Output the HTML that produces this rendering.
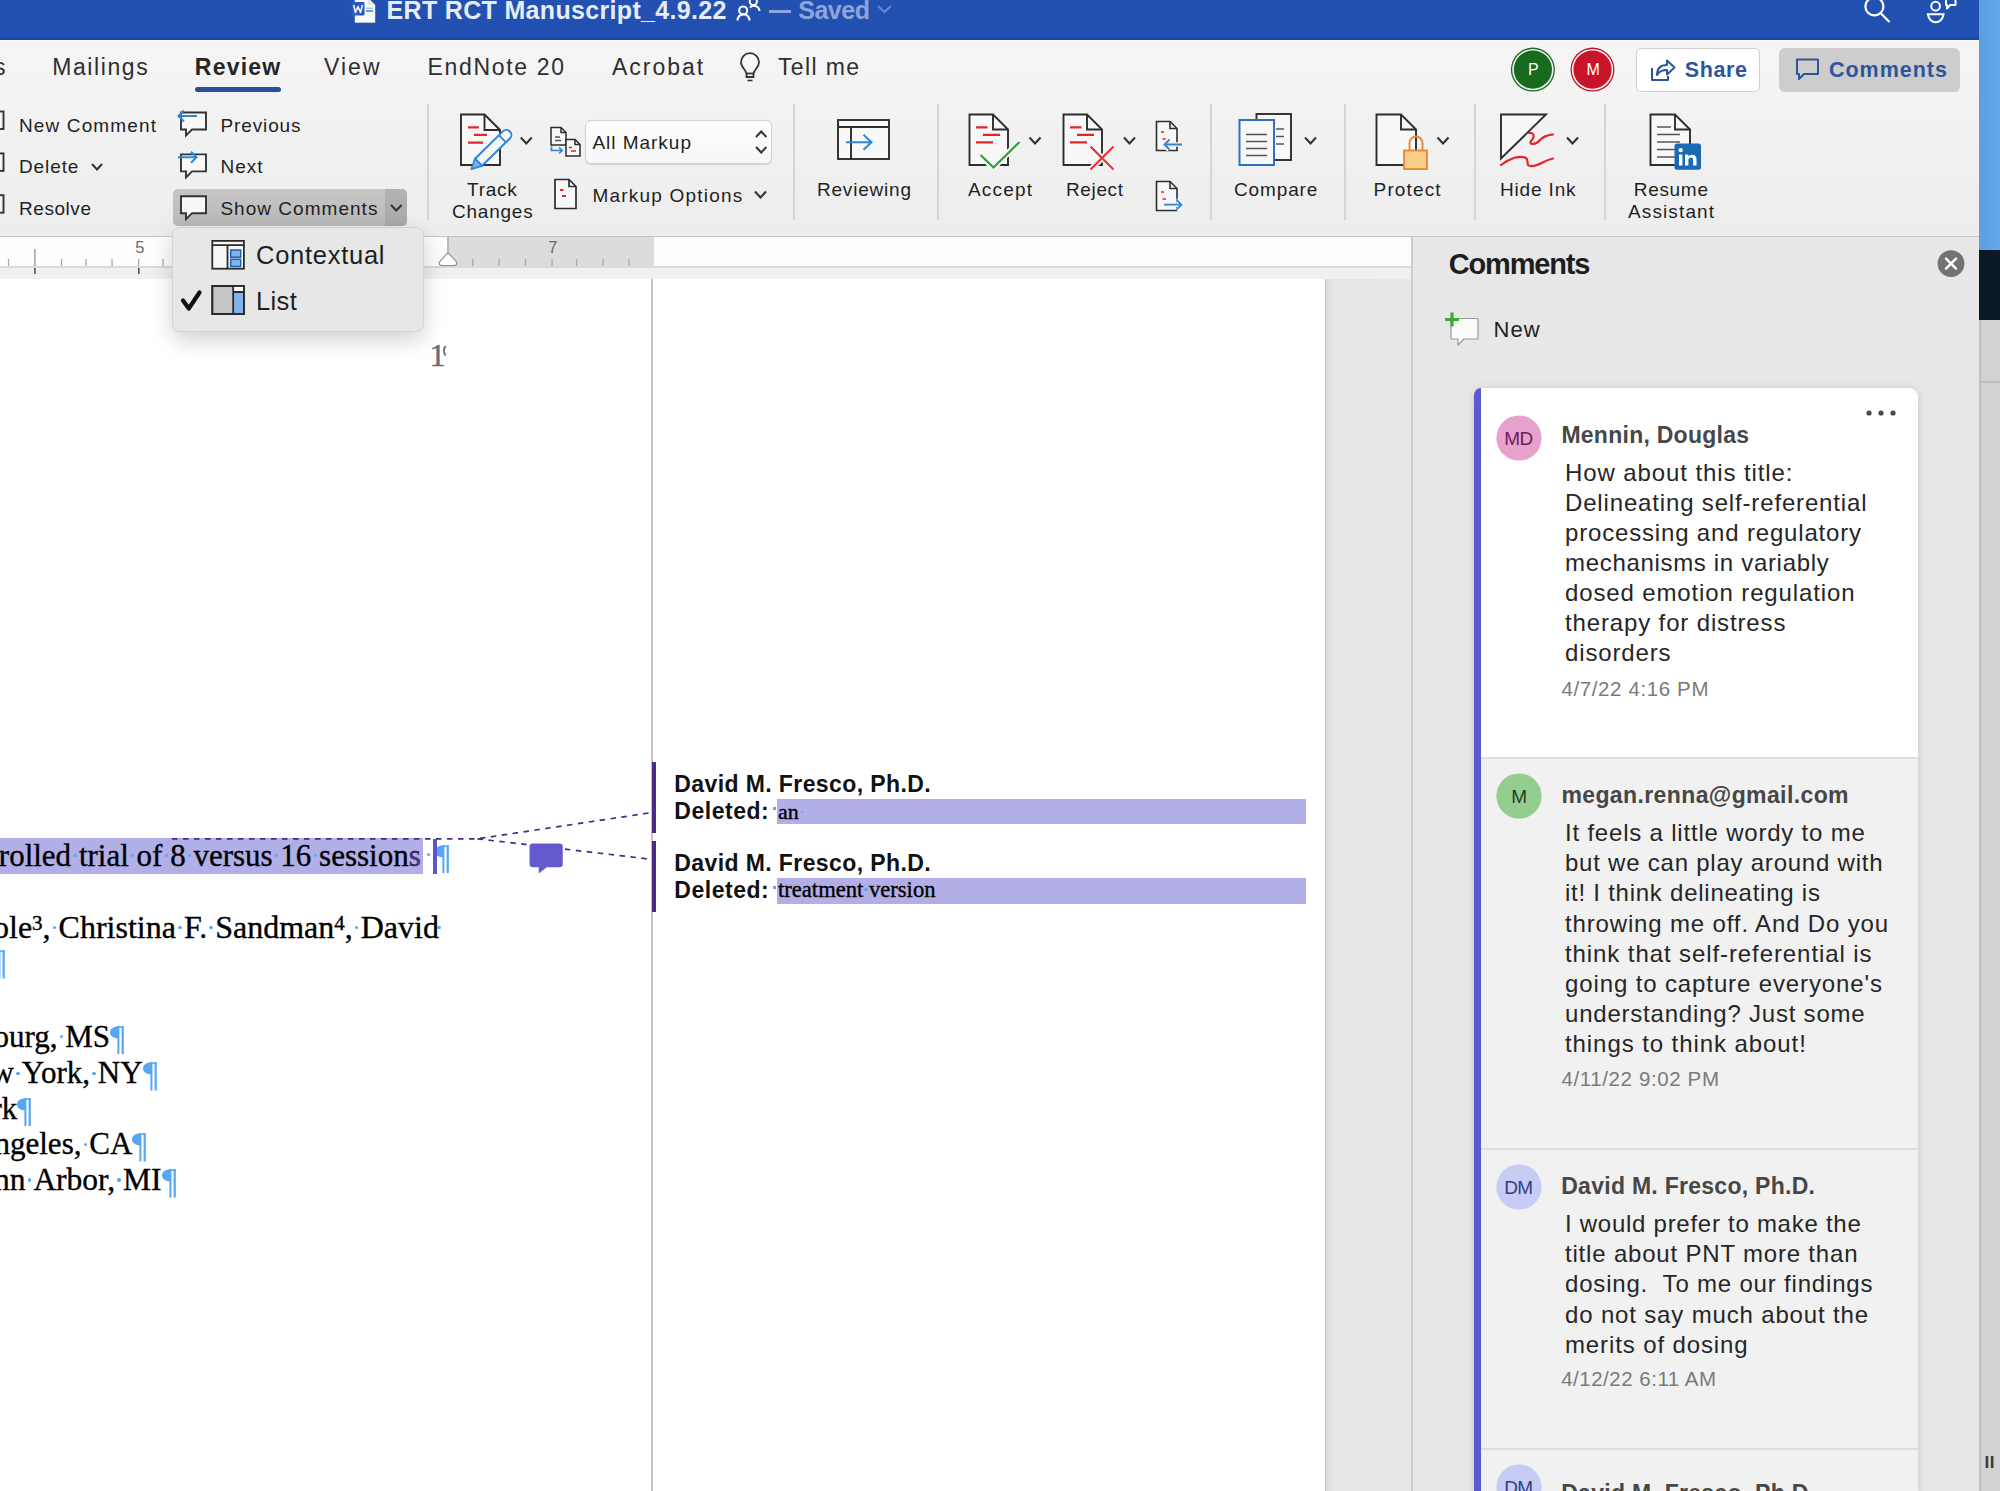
<!DOCTYPE html>
<html><head><meta charset="utf-8"><style>*{margin:0;padding:0;box-sizing:border-box}
html,body{width:2000px;height:1491px;overflow:hidden;background:#e8e8e8;font-family:"Liberation Sans",sans-serif;color:#222;position:relative}
.a{position:absolute;white-space:nowrap}
svg.a{overflow:visible}
.d{position:relative}
.d::after{content:'';position:absolute;left:calc(50% - 1.7px);bottom:0.49em;width:3.4px;height:3.4px;border-radius:50%;background:#59a9f2}
.pc{display:inline-block;vertical-align:-7.5px}
</style></head><body>
<div class="a" style="left:0px;top:0px;width:1979px;height:40px;background:linear-gradient(#2351b2 0,#2250b1 37px,#1848ae 38.5px,#1848ae 39px)"></div>
<div class="a" style="left:0px;top:40px;width:1979px;height:1px;background:#fbfbfb"></div>
<div class="a" style="left:1979px;top:0px;width:21px;height:250px;background:linear-gradient(90deg,#5b9fe0,#63a8ea)"></div>
<div class="a" style="left:1979px;top:250px;width:21px;height:70px;background:#0b1828"></div>
<div class="a" style="left:1979px;top:320px;width:21px;height:1171px;background:linear-gradient(90deg,#b8b8b8,#d2d2d2 3px,#d3d3d3)"></div>
<div class="a" style="left:1979px;top:381px;width:21px;height:1.5px;background:#bdbdbd"></div>
<div class="a" style="left:0px;top:41px;width:1979px;height:195px;background:linear-gradient(#f5f5f5,#ededed)"></div>
<div class="a" style="left:0px;top:236px;width:1979px;height:1px;background:#c6c6c6"></div>
<div class="a" style="left:0px;top:237px;width:1412px;height:30px;background:#fdfdfd"></div>
<div class="a" style="left:448px;top:237px;width:206px;height:30px;background:#dcdcdc"></div>
<div class="a" style="left:0px;top:266px;width:1412px;height:2px;background:#dadada"></div>
<div class="a" style="left:0px;top:268px;width:1412px;height:11px;background:#f0f0f0"></div>
<div class="a" style="left:0px;top:279px;width:1325px;height:1212px;background:#ffffff"></div>
<div class="a" style="left:1325px;top:279px;width:87px;height:1212px;background:linear-gradient(90deg,#dcdcdc,#e6e6e6 8px,#e7e7e7);border-left:1.5px solid #c2c2c2"></div>
<div class="a" style="left:651px;top:279px;width:2px;height:1212px;background:#c4c4c4"></div>
<div class="a" style="left:1411px;top:237px;width:2px;height:1254px;background:#cdcdcd"></div>
<div class="a" style="left:1413px;top:237px;width:566px;height:1254px;background:#e7e7e7"></div>
<svg class="a" style="left:350px;top:-2px;" width="30" height="28" viewBox="0 0 30 28"><path d="M5 0 H18 L25 7 V24.5 H5 Z" fill="#fafafa" stroke="#d8dce8" stroke-width="0.5"/><path d="M18 0 V7 H25" fill="#e8e8e8"/><rect x="16" y="9.5" width="7" height="1.6" fill="#9fc8f2"/><rect x="16" y="12.2" width="7" height="1.6" fill="#4f86d9"/><rect x="1.5" y="4" width="13" height="13.5" rx="1.2" fill="#2a5bc0"/><path d="M3.6 7 L5.5 14.5 L8 8.5 L10.5 14.5 L12.4 7" fill="none" stroke="#fff" stroke-width="1.5" stroke-linejoin="round"/></svg>
<div class="a" style="left:386.5px;top:-1.7px;font:bold 25px/25px 'Liberation Sans',sans-serif;color:#e8ecf7;letter-spacing:0.33px;">ERT RCT Manuscript_4.9.22</div>
<svg class="a" style="left:735px;top:-4px;" width="28" height="28" viewBox="0 0 28 28"><g fill="none" stroke="#fff" stroke-width="2"><circle cx="8.2" cy="14.4" r="4"/><path d="M2.5 24.5 A6 6.3 0 0 1 14.5 24.5"/><circle cx="18.3" cy="5.5" r="3.6"/><path d="M15 11.5 A5.5 5.5 0 0 1 24.5 15"/></g></svg>
<div class="a" style="left:769px;top:10px;width:22px;height:3px;background:#8ea5d9"></div>
<div class="a" style="left:798.3px;top:-2.2px;font:bold 25px/25px 'Liberation Sans',sans-serif;color:#8ea5d9;letter-spacing:-0.51px;">Saved</div>
<svg class="a" style="left:876px;top:3px;" width="18" height="12" viewBox="0 0 18 12"><path d="M2 3 L8.5 9 L15 3" fill="none" stroke="#6e8bd0" stroke-width="1.8"/></svg>
<svg class="a" style="left:1860px;top:-6px;" width="36" height="32" viewBox="0 0 36 32"><g fill="none" stroke="#fff" stroke-width="2.2"><circle cx="14.4" cy="12.4" r="9"/><path d="M21 19.5 L29.5 28"/></g></svg>
<svg class="a" style="left:1922px;top:-4px;" width="40" height="32" viewBox="0 0 40 32"><g fill="none" stroke="#fff" stroke-width="2"><circle cx="13.6" cy="10.2" r="4.4"/><path d="M5.8 18.2 H21.6 A8 9.5 0 0 1 5.8 18.2 Z"/><path d="M24 1 H33.5 V9 H28 L25 12.5 V9 H24 Z" stroke-linejoin="round"/></g></svg>
<div class="a" style="left:-6.0px;top:56.0px;font:normal 23px/23px 'Liberation Sans',sans-serif;color:#2e2e2e;letter-spacing:0.00px;">s</div>
<div class="a" style="left:52.2px;top:56.0px;font:normal 23px/23px 'Liberation Sans',sans-serif;color:#2e2e2e;letter-spacing:1.60px;">Mailings</div>
<div class="a" style="left:194.8px;top:56.0px;font:bold 23px/23px 'Liberation Sans',sans-serif;color:#262626;letter-spacing:1.23px;">Review</div>
<div class="a" style="left:195px;top:87px;width:86px;height:5px;background:#2b4f9c;border-radius:3px"></div>
<div class="a" style="left:324.0px;top:56.0px;font:normal 23px/23px 'Liberation Sans',sans-serif;color:#2e2e2e;letter-spacing:2.02px;">View</div>
<div class="a" style="left:427.5px;top:56.0px;font:normal 23px/23px 'Liberation Sans',sans-serif;color:#2e2e2e;letter-spacing:1.67px;">EndNote 20</div>
<div class="a" style="left:612.0px;top:56.0px;font:normal 23px/23px 'Liberation Sans',sans-serif;color:#2e2e2e;letter-spacing:1.96px;">Acrobat</div>
<svg class="a" style="left:738px;top:50px;" width="24" height="34" viewBox="0 0 24 34"><g fill="none" stroke="#333" stroke-width="1.8"><path d="M8.5 27 V24 C8.5 20 3 17.5 3 12.2 A9 9 0 0 1 21 12.2 C21 17.5 15.5 20 15.5 24 V27 Z" fill="#f7f7f7"/><path d="M8.5 23.5 H15.5"/><path d="M9.5 30.5 H14.5" stroke-width="1.6"/></g></svg>
<div class="a" style="left:778.0px;top:56.0px;font:normal 23px/23px 'Liberation Sans',sans-serif;color:#2e2e2e;letter-spacing:1.35px;">Tell me</div>
<svg class="a" style="left:1508px;top:45px;" width="50" height="50" viewBox="0 0 50 50"><circle cx="24.9" cy="24.6" r="22" fill="#186a1e"/><circle cx="24.9" cy="24.6" r="20.7" fill="#f2f2f2"/><circle cx="24.9" cy="24.6" r="19.1" fill="#186a1e"/></svg>
<div class="a" style="left:1528.0px;top:62.4px;font:normal 16px/16px 'Liberation Sans',sans-serif;color:#fff;letter-spacing:0.00px;">P</div>
<svg class="a" style="left:1568px;top:45px;" width="50" height="50" viewBox="0 0 50 50"><circle cx="24.5" cy="24.6" r="22" fill="#c8142a"/><circle cx="24.5" cy="24.6" r="20.7" fill="#f2f2f2"/><circle cx="24.5" cy="24.6" r="19.1" fill="#c8142a"/></svg>
<div class="a" style="left:1586.6px;top:62.4px;font:normal 16px/16px 'Liberation Sans',sans-serif;color:#fff;letter-spacing:0.00px;">M</div>
<div class="a" style="left:1636px;top:48px;width:124px;height:44px;background:#fff;border:1.5px solid #cfcfcf;border-radius:5px"></div>
<svg class="a" style="left:1648px;top:56px;" width="30" height="28" viewBox="0 0 30 28"><g fill="none" stroke="#2c569c" stroke-width="2" stroke-linejoin="round"><path d="M4 12 V24 H20 V20"/><path d="M9 19 C9 12 13 9 19 9 V4.5 L26.5 11.5 L19 18.5 V14 C14 14 11 15.5 9 19 Z"/></g></svg>
<div class="a" style="left:1684.7px;top:60.2px;font:bold 21.5px/21.5px 'Liberation Sans',sans-serif;color:#2c569c;letter-spacing:0.63px;">Share</div>
<div class="a" style="left:1779px;top:47.5px;width:181px;height:44.5px;background:#cdcdcd;border-radius:6px"></div>
<svg class="a" style="left:1792px;top:56px;" width="30" height="28" viewBox="0 0 30 28"><path d="M5 3.5 H26 V18 H12 L7 23 V18 H5 Z" fill="none" stroke="#2c569c" stroke-width="2" stroke-linejoin="round"/></svg>
<div class="a" style="left:1829.0px;top:60.2px;font:bold 21.5px/21.5px 'Liberation Sans',sans-serif;color:#2c569c;letter-spacing:0.98px;">Comments</div>
<svg class="a" style="left:-22px;top:110px;" width="30" height="24" viewBox="0 0 30 24"><rect x="1" y="1.5" width="24.5" height="17.5" fill="#f7f7f7" stroke="#333" stroke-width="1.9"/></svg>
<svg class="a" style="left:-22px;top:152px;" width="30" height="24" viewBox="0 0 30 24"><rect x="1" y="1.4" width="24.5" height="17.5" fill="#f7f7f7" stroke="#333" stroke-width="1.9"/></svg>
<svg class="a" style="left:-22px;top:194px;" width="30" height="24" viewBox="0 0 30 24"><rect x="1" y="1.2" width="24.5" height="17.5" fill="#f7f7f7" stroke="#333" stroke-width="1.9"/></svg>
<div class="a" style="left:19.0px;top:115.9px;font:normal 19px/19px 'Liberation Sans',sans-serif;color:#1f1f1f;letter-spacing:1.13px;">New Comment</div>
<div class="a" style="left:19.0px;top:157.2px;font:normal 19px/19px 'Liberation Sans',sans-serif;color:#1f1f1f;letter-spacing:0.90px;">Delete</div>
<svg class="a" style="left:88px;top:160px;" width="18" height="14" viewBox="0 0 18 14"><path d="M4 4 L9 9.5 L14 4" fill="none" stroke="#333" stroke-width="2"/></svg>
<div class="a" style="left:19.0px;top:198.9px;font:normal 19px/19px 'Liberation Sans',sans-serif;color:#1f1f1f;letter-spacing:0.55px;">Resolve</div>
<div class="a" style="left:173px;top:189px;width:234px;height:37px;background:linear-gradient(#c6c6c6,#b9b9b9);border-radius:5px"></div>
<div class="a" style="left:385px;top:189px;width:22px;height:37px;background:linear-gradient(#b3b3b3,#a9a9a9);border-radius:0 5px 5px 0"></div>
<svg class="a" style="left:170px;top:105px;" width="50" height="125" viewBox="0 0 50 125"><path d="M11 7.5 H36 V24.5 H22 L16 30.5 V24.5 H11 Z" fill="#f8f8f8" stroke="#333" stroke-width="1.9" stroke-linejoin="miter"/><path d="M11 49.4 H36 V66.4 H22 L16 72.4 V66.4 H11 Z" fill="#f8f8f8" stroke="#333" stroke-width="1.9" stroke-linejoin="miter"/><path d="M11 91.2 H36 V108.2 H22 L16 114.2 V108.2 H11 Z" fill="#f8f8f8" stroke="#333" stroke-width="1.9" stroke-linejoin="miter"/><g fill="none" stroke="#2f86d6" stroke-width="2"><path d="M8 11 H27 M14 5.5 L8.5 11 L14 16.5"/><path d="M8 52.2 H27 M21 46.7 L26.5 52.2 L21 57.7"/></g></svg>
<div class="a" style="left:220.5px;top:115.9px;font:normal 19px/19px 'Liberation Sans',sans-serif;color:#1f1f1f;letter-spacing:0.87px;">Previous</div>
<div class="a" style="left:220.5px;top:157.2px;font:normal 19px/19px 'Liberation Sans',sans-serif;color:#1f1f1f;letter-spacing:0.98px;">Next</div>
<div class="a" style="left:220.4px;top:198.9px;font:normal 19px/19px 'Liberation Sans',sans-serif;color:#1f1f1f;letter-spacing:1.03px;">Show Comments</div>
<svg class="a" style="left:386px;top:200px;" width="20" height="16" viewBox="0 0 20 16"><path d="M5 5 L10.3 10.5 L15.6 5" fill="none" stroke="#333" stroke-width="2"/></svg>
<div class="a" style="left:427px;top:104px;width:2px;height:116px;background:#d5d5d5"></div>
<div class="a" style="left:793px;top:104px;width:2px;height:116px;background:#d5d5d5"></div>
<div class="a" style="left:937px;top:104px;width:2px;height:116px;background:#d5d5d5"></div>
<div class="a" style="left:1210px;top:104px;width:2px;height:116px;background:#d5d5d5"></div>
<div class="a" style="left:1344px;top:104px;width:2px;height:116px;background:#d5d5d5"></div>
<div class="a" style="left:1474px;top:104px;width:2px;height:116px;background:#d5d5d5"></div>
<div class="a" style="left:1604px;top:104px;width:2px;height:116px;background:#d5d5d5"></div>
<svg class="a" style="left:0px;top:0px;" width="2000" height="240" viewBox="0 0 2000 240"><path d="M461 114.5 H484.5 L500 130.0 V165 H461 Z" fill="#f8f8f8" stroke="#2d2d2d" stroke-width="1.9" stroke-linejoin="miter"/><path d="M484.5 114.5 V130.0 H500" fill="none" stroke="#2d2d2d" stroke-width="1.9"/><g stroke="#e4262b" stroke-width="2.2"><path d="M468 127.4 H479 M474 134.8 H487 M468 142.6 H483"/></g><g transform="translate(491 150) rotate(-44.4)"><path d="M-17.5 -5 H21.5 A5 5 0 0 1 21.5 5 H-17.5 Z" fill="#f6f6f6" stroke="#2f86d6" stroke-width="2"/><path d="M-17.5 -5 L-27.5 0 L-17.5 5 Z" fill="#7ab4ea" stroke="#2f86d6" stroke-width="1.8" stroke-linejoin="round"/><path d="M16 -5 V5" stroke="#2f86d6" stroke-width="1.8"/></g><path d="M520.8 137.5 L526.3 143.5 L531.8 137.5" fill="none" stroke="#333" stroke-width="2.1"/><path d="M551 127.5 H561 L566 132.5 V145 H551 Z" fill="#f8f8f8" stroke="#2d2d2d" stroke-width="1.5" stroke-linejoin="miter"/><path d="M561 127.5 V132.5 H566" fill="none" stroke="#2d2d2d" stroke-width="1.5"/><path d="M555 137 H560 M555 140.5 H561" stroke="#555" stroke-width="1.3"/><path d="M566 139.5 H575 L580 144.5 V156 H566 Z" fill="#f8f8f8" stroke="#2d2d2d" stroke-width="1.5" stroke-linejoin="miter"/><path d="M575 139.5 V144.5 H580" fill="none" stroke="#2d2d2d" stroke-width="1.5"/><path d="M569 147.5 H572 M571 151 H576" stroke="#e4262b" stroke-width="1.6"/><path d="M551.5 146.5 V150.5 H562 M559 147.5 L562.2 150.5 L559 153.5" fill="none" stroke="#2f86d6" stroke-width="1.7"/><path d="M555 179.5 H569 L576 186.5 V208.5 H555 Z" fill="#f8f8f8" stroke="#2d2d2d" stroke-width="1.7" stroke-linejoin="miter"/><path d="M569 179.5 V186.5 H576" fill="none" stroke="#2d2d2d" stroke-width="1.7"/><path d="M560 190 H563.5 M562 196 H566" stroke="#e4262b" stroke-width="1.8"/><path d="M755 191.5 L760.5 197.5 L766 191.5" fill="none" stroke="#333" stroke-width="2.1"/><g fill="#f8f8f8" stroke="#2d2d2d" stroke-width="1.9"><rect x="838" y="120" width="51" height="39"/><path d="M838 127 H889 M851 127 V159" fill="none"/></g><path d="M846 142.3 H871.5 M863.5 134.8 L871.5 142.3 L863.5 149.8" fill="none" stroke="#2f86d6" stroke-width="2"/><path d="M969.5 114.5 H993 L1008 129.5 V165 H969.5 Z" fill="#f8f8f8" stroke="#2d2d2d" stroke-width="1.9" stroke-linejoin="miter"/><path d="M993 114.5 V129.5 H1008" fill="none" stroke="#2d2d2d" stroke-width="1.9"/><path d="M976 127.3 H987.5 M983 134.8 H1000 M976 142.3 H993" stroke="#e4262b" stroke-width="2.2"/><path d="M978 152 L993 168 L1021 140" fill="none" stroke="#f5f5f5" stroke-width="6"/><path d="M980.5 155 L993.5 167.5 L1019.5 142" fill="none" stroke="#26a43c" stroke-width="2.2"/><path d="M1029.5 137.5 L1035.0 143.5 L1040.5 137.5" fill="none" stroke="#333" stroke-width="2.1"/><path d="M1063.5 114.5 H1087 L1102 129.5 V165 H1063.5 Z" fill="#f8f8f8" stroke="#2d2d2d" stroke-width="1.9" stroke-linejoin="miter"/><path d="M1087 114.5 V129.5 H1102" fill="none" stroke="#2d2d2d" stroke-width="1.9"/><path d="M1070 127.3 H1081.5 M1077 134.8 H1094 M1070 142.3 H1087" stroke="#e4262b" stroke-width="2.2"/><path d="M1089 145 L1115 171 M1115 145 L1089 171" fill="none" stroke="#f5f5f5" stroke-width="6"/><path d="M1090.5 146.5 L1113.5 169.5 M1113.5 146.5 L1090.5 169.5" fill="none" stroke="#e4343a" stroke-width="2.2"/><path d="M1124 137.5 L1129.5 143.5 L1135 137.5" fill="none" stroke="#333" stroke-width="2.1"/><path d="M1156.5 121.5 H1170 L1177 128.5 V150.5 H1156.5 Z" fill="#f8f8f8" stroke="#2d2d2d" stroke-width="1.6" stroke-linejoin="miter"/><path d="M1170 121.5 V128.5 H1177" fill="none" stroke="#2d2d2d" stroke-width="1.6"/><path d="M1161 132 H1164 M1162.5 139 H1166" stroke="#e4262b" stroke-width="1.7"/><path d="M1163 144.5 H1183 M1169 139 L1163.5 144.5 L1169 150" fill="none" stroke="#f5f5f5" stroke-width="4.5"/><path d="M1164 144.5 H1182 M1169.5 139.5 L1164.5 144.5 L1169.5 149.5" fill="none" stroke="#2f86d6" stroke-width="1.8"/><path d="M1156.5 181.5 H1170 L1177 188.5 V210.5 H1156.5 Z" fill="#f8f8f8" stroke="#2d2d2d" stroke-width="1.6" stroke-linejoin="miter"/><path d="M1170 181.5 V188.5 H1177" fill="none" stroke="#2d2d2d" stroke-width="1.6"/><path d="M1161 192 H1164 M1162.5 199 H1166" stroke="#e4262b" stroke-width="1.7"/><path d="M1163 204.7 H1183 M1177 199 L1182.5 204.7 L1177 210.5" fill="none" stroke="#f5f5f5" stroke-width="4.5"/><path d="M1164 204.7 H1182 M1176.5 199.7 L1181.5 204.7 L1176.5 209.7" fill="none" stroke="#2f86d6" stroke-width="1.8"/><rect x="1256.5" y="114" width="34.5" height="46" fill="#f8f8f8" stroke="#2d2d2d" stroke-width="1.9"/><path d="M1276 129 H1284 M1276 136.5 H1284 M1276 144 H1284" stroke="#555" stroke-width="1.6"/><rect x="1239.5" y="120" width="34.5" height="45" fill="#f8f8f8" stroke="#2f6fc6" stroke-width="2"/><path d="M1246 134.5 H1267 M1246 141.5 H1267 M1246 148.5 H1267 M1246 155.5 H1267" stroke="#555" stroke-width="1.6"/><path d="M1305 137.5 L1310.5 143.5 L1316 137.5" fill="none" stroke="#333" stroke-width="2.1"/><path d="M1376.5 114.5 H1401 L1416 129.5 V165 H1376.5 Z" fill="#f8f8f8" stroke="#2d2d2d" stroke-width="1.9" stroke-linejoin="miter"/><path d="M1401 114.5 V129.5 H1416" fill="none" stroke="#2d2d2d" stroke-width="1.9"/><path d="M1409.5 151 V143 A6.5 6.5 0 0 1 1422.5 143 V151" fill="none" stroke="#e88b35" stroke-width="2"/><rect x="1404" y="150.5" width="23" height="18.5" fill="#f5cf85" stroke="#e88b35" stroke-width="1.9"/><path d="M1437.5 137.5 L1443.0 143.5 L1448.5 137.5" fill="none" stroke="#333" stroke-width="2.1"/><path d="M1501 114.5 H1546 L1501 158.5 Z" fill="#f8f8f8" stroke="#2d2d2d" stroke-width="1.9" stroke-linejoin="miter"/><g fill="none" stroke="#e4262b" stroke-width="2.2" stroke-linecap="round"><path d="M1529 133 C1533 132 1536 136 1531 141 C1528 145 1536 145 1540 140 C1545 135 1549 135 1553 134.5"/><path d="M1501 165 C1510 158 1520 155 1526 158 C1530 161 1524 167 1533 166 C1540 165 1545 160 1553 158.5"/></g><path d="M1567 137.5 L1572.5 143.5 L1578 137.5" fill="none" stroke="#333" stroke-width="2.1"/><path d="M1650.5 114.5 H1675 L1690 129.5 V165 H1650.5 Z" fill="#f8f8f8" stroke="#2d2d2d" stroke-width="1.9" stroke-linejoin="miter"/><path d="M1675 114.5 V129.5 H1690" fill="none" stroke="#2d2d2d" stroke-width="1.9"/><path d="M1657 127 H1671 M1657 134.5 H1680 M1657 142 H1680 M1657 149.5 H1677 M1657 157 H1675" stroke="#555" stroke-width="1.6"/><rect x="1674.5" y="143.5" width="26.5" height="26.3" rx="2.5" fill="#1a6ab3"/><rect x="1679" y="154.5" width="3.4" height="11" fill="#fff"/><circle cx="1680.7" cy="150.2" r="2.1" fill="#fff"/><path d="M1685 165.5 V154.5 H1688.3 V156.5 C1689.5 154.5 1696.5 153 1696.5 159.5 V165.5 H1693.1 V159.8 C1693.1 156.5 1688.4 157 1688.4 160 V165.5 Z" fill="#fff"/></svg>
<div class="a" style="left:467.0px;top:179.9px;font:normal 19px/19px 'Liberation Sans',sans-serif;color:#1f1f1f;letter-spacing:0.77px;">Track</div>
<div class="a" style="left:452.0px;top:201.9px;font:normal 19px/19px 'Liberation Sans',sans-serif;color:#1f1f1f;letter-spacing:0.77px;">Changes</div>
<div class="a" style="left:584.5px;top:119.5px;width:187.5px;height:44px;background:linear-gradient(#fdfdfd,#f7f7f7);border:1px solid #d2d2d2;border-radius:6px;box-shadow:0 0.5px 1px rgba(0,0,0,0.12)"></div>
<div class="a" style="left:592.4px;top:132.9px;font:normal 19px/19px 'Liberation Sans',sans-serif;color:#1f1f1f;letter-spacing:0.98px;">All Markup</div>
<svg class="a" style="left:750px;top:125px;" width="22" height="34" viewBox="0 0 22 34"><path d="M6 12 L11.2 6.5 L16.4 12 M6 22 L11.2 27.5 L16.4 22" fill="none" stroke="#333" stroke-width="2"/></svg>
<div class="a" style="left:592.4px;top:186.2px;font:normal 19px/19px 'Liberation Sans',sans-serif;color:#1f1f1f;letter-spacing:1.22px;">Markup Options</div>
<div class="a" style="left:817.0px;top:179.9px;font:normal 19px/19px 'Liberation Sans',sans-serif;color:#1f1f1f;letter-spacing:0.79px;">Reviewing</div>
<div class="a" style="left:968.0px;top:179.9px;font:normal 19px/19px 'Liberation Sans',sans-serif;color:#1f1f1f;letter-spacing:1.19px;">Accept</div>
<div class="a" style="left:1066.0px;top:179.9px;font:normal 19px/19px 'Liberation Sans',sans-serif;color:#1f1f1f;letter-spacing:0.63px;">Reject</div>
<div class="a" style="left:1234.0px;top:179.9px;font:normal 19px/19px 'Liberation Sans',sans-serif;color:#1f1f1f;letter-spacing:0.87px;">Compare</div>
<div class="a" style="left:1373.6px;top:179.9px;font:normal 19px/19px 'Liberation Sans',sans-serif;color:#1f1f1f;letter-spacing:1.13px;">Protect</div>
<div class="a" style="left:1500.0px;top:179.9px;font:normal 19px/19px 'Liberation Sans',sans-serif;color:#1f1f1f;letter-spacing:0.84px;">Hide Ink</div>
<div class="a" style="left:1633.8px;top:179.9px;font:normal 19px/19px 'Liberation Sans',sans-serif;color:#1f1f1f;letter-spacing:0.68px;">Resume</div>
<div class="a" style="left:1628.0px;top:201.9px;font:normal 19px/19px 'Liberation Sans',sans-serif;color:#1f1f1f;letter-spacing:1.12px;">Assistant</div>
<svg class="a" style="left:0px;top:0px;" width="700" height="300" viewBox="0 0 700 300"><rect x="7.9" y="259" width="1.3" height="7" fill="#a9a9a9"/><rect x="60.9" y="259" width="1.3" height="7" fill="#a9a9a9"/><rect x="85.4" y="259" width="1.3" height="7" fill="#a9a9a9"/><rect x="111.4" y="259" width="1.3" height="7" fill="#a9a9a9"/><rect x="138.0" y="259" width="1.3" height="7" fill="#a9a9a9"/><rect x="162.4" y="259" width="1.3" height="7" fill="#a9a9a9"/><rect x="472.1" y="259" width="1.3" height="7" fill="#a9a9a9"/><rect x="498.4" y="259" width="1.3" height="7" fill="#a9a9a9"/><rect x="524.8" y="259" width="1.3" height="7" fill="#a9a9a9"/><rect x="575.9" y="259" width="1.3" height="7" fill="#a9a9a9"/><rect x="602.4" y="259" width="1.3" height="7" fill="#a9a9a9"/><rect x="628.4" y="259" width="1.3" height="7" fill="#a9a9a9"/><rect x="551.4" y="259" width="1.3" height="7" fill="#a9a9a9"/><rect x="34.2" y="249" width="1.4" height="17" fill="#9a9a9a"/><rect x="34.1" y="268" width="1.6" height="6" fill="#555"/><rect x="138" y="268" width="1.6" height="6" fill="#555"/><rect x="447.3" y="237" width="1.3" height="15" fill="#a0a0a0"/><path d="M448 252.5 L456.5 262 Q457.5 265.5 454 265.5 H442 Q438.5 265.5 439.5 262 Z" fill="#fff" stroke="#8a8a8a" stroke-width="1.1"/></svg>
<div class="a" style="left:135.3px;top:238.5px;font:normal 16.5px/16.5px 'Liberation Sans',sans-serif;color:#6a6a6a;letter-spacing:0.00px;">5</div>
<div class="a" style="left:548.3px;top:239.0px;font:normal 16.5px/16.5px 'Liberation Sans',sans-serif;color:#6a6a6a;letter-spacing:0.00px;">7</div>
<div class="a" style="left:429.5px;top:339.0px;font:normal 32px/32px 'Liberation Serif',serif;color:#6e6e6e;letter-spacing:0.00px;-webkit-text-stroke:0.5px #6e6e6e">1</div>
<svg class="a" style="left:441px;top:344px;" width="8" height="14" viewBox="0 0 8 14"><path d="M4.8 2 C2.2 4.5 2.2 9 4.8 11.5" fill="none" stroke="#7a7a7a" stroke-width="2"/></svg>
<div class="a" style="left:0px;top:838px;width:423px;height:36px;background:#b1aee8"></div>
<div class="a" style="left:-1.2px;top:839.6px;font:31px/31px 'Liberation Serif',serif;color:#000;-webkit-text-stroke:0.35px #000">rolled<span class="d"> </span>trial<span class="d"> </span>of<span class="d"> </span>8<span class="d"> </span>versus<span class="d"> </span>16<span class="d"> </span>session<span style="color:#5b2d90">s</span></div>
<div class="a" style="left:426.5px;top:853px;width:3px;height:3px;background:#59a9f2;border-radius:50%"></div>
<div class="a" style="left:435px;top:839.6px;font:31px/31px 'Liberation Serif',serif;color:#000;-webkit-text-stroke:0.35px #000"><svg class="pc" width="14" height="28.5" viewBox="0 0 14 28.5"><g fill="#56a6f5"><path d="M8.9 0.3 C2.8 0.3 0 3.4 0 6.4 C0 9.5 2.8 12.3 8.9 12.3 Z"/><rect x="7.4" y="0.3" width="8.2" height="1.6"/><rect x="7.4" y="0.3" width="2" height="28.2"/><rect x="11.6" y="0.3" width="2.2" height="28.2"/></g></svg></div>
<div class="a" style="left:433px;top:838.7px;width:4px;height:35px;background:#5e55c8"></div>
<div class="a" style="left:-7px;top:910.7px;font:32px/32px 'Liberation Serif',serif;color:#000;-webkit-text-stroke:0.35px #000">ole<span style="font-size:21px;vertical-align:8px;line-height:0">3</span>,<span class="d"> </span>Christina<span class="d"> </span>F.<span class="d"> </span>Sandman<span style="font-size:21px;vertical-align:8px;line-height:0">4</span>,<span class="d"> </span>David<span class="d"> </span></div>
<div class="a" style="left:-9px;top:945.0px;font:31px/31px 'Liberation Serif',serif;color:#000;-webkit-text-stroke:0.35px #000"><svg class="pc" width="14" height="28.5" viewBox="0 0 14 28.5"><g fill="#56a6f5"><path d="M8.9 0.3 C2.8 0.3 0 3.4 0 6.4 C0 9.5 2.8 12.3 8.9 12.3 Z"/><rect x="7.4" y="0.3" width="8.2" height="1.6"/><rect x="7.4" y="0.3" width="2" height="28.2"/><rect x="11.6" y="0.3" width="2.2" height="28.2"/></g></svg></div>
<div class="a" style="left:-6.5px;top:1020.5px;font:31px/31px 'Liberation Serif',serif;color:#000;-webkit-text-stroke:0.35px #000">ourg,<span class="d"> </span>MS<svg class="pc" width="14" height="28.5" viewBox="0 0 14 28.5"><g fill="#56a6f5"><path d="M8.9 0.3 C2.8 0.3 0 3.4 0 6.4 C0 9.5 2.8 12.3 8.9 12.3 Z"/><rect x="7.4" y="0.3" width="8.2" height="1.6"/><rect x="7.4" y="0.3" width="2" height="28.2"/><rect x="11.6" y="0.3" width="2.2" height="28.2"/></g></svg></div>
<div class="a" style="left:-8.4px;top:1057.3px;font:31px/31px 'Liberation Serif',serif;color:#000;-webkit-text-stroke:0.35px #000">w<span class="d"> </span>York,<span class="d"> </span>NY<svg class="pc" width="14" height="28.5" viewBox="0 0 14 28.5"><g fill="#56a6f5"><path d="M8.9 0.3 C2.8 0.3 0 3.4 0 6.4 C0 9.5 2.8 12.3 8.9 12.3 Z"/><rect x="7.4" y="0.3" width="8.2" height="1.6"/><rect x="7.4" y="0.3" width="2" height="28.2"/><rect x="11.6" y="0.3" width="2.2" height="28.2"/></g></svg></div>
<div class="a" style="left:-8.5px;top:1092.9px;font:31px/31px 'Liberation Serif',serif;color:#000;-webkit-text-stroke:0.35px #000">rk<svg class="pc" width="14" height="28.5" viewBox="0 0 14 28.5"><g fill="#56a6f5"><path d="M8.9 0.3 C2.8 0.3 0 3.4 0 6.4 C0 9.5 2.8 12.3 8.9 12.3 Z"/><rect x="7.4" y="0.3" width="8.2" height="1.6"/><rect x="7.4" y="0.3" width="2" height="28.2"/><rect x="11.6" y="0.3" width="2.2" height="28.2"/></g></svg></div>
<div class="a" style="left:-5.5px;top:1128.4px;font:31px/31px 'Liberation Serif',serif;color:#000;-webkit-text-stroke:0.35px #000">ngeles,<span class="d"> </span>CA<svg class="pc" width="14" height="28.5" viewBox="0 0 14 28.5"><g fill="#56a6f5"><path d="M8.9 0.3 C2.8 0.3 0 3.4 0 6.4 C0 9.5 2.8 12.3 8.9 12.3 Z"/><rect x="7.4" y="0.3" width="8.2" height="1.6"/><rect x="7.4" y="0.3" width="2" height="28.2"/><rect x="11.6" y="0.3" width="2.2" height="28.2"/></g></svg></div>
<div class="a" style="left:-6px;top:1164.2px;font:31.5px/31.5px 'Liberation Serif',serif;color:#000;-webkit-text-stroke:0.35px #000">nn<span class="d"> </span>Arbor,<span class="d"> </span>MI<svg class="pc" width="14" height="28.5" viewBox="0 0 14 28.5"><g fill="#56a6f5"><path d="M8.9 0.3 C2.8 0.3 0 3.4 0 6.4 C0 9.5 2.8 12.3 8.9 12.3 Z"/><rect x="7.4" y="0.3" width="8.2" height="1.6"/><rect x="7.4" y="0.3" width="2" height="28.2"/><rect x="11.6" y="0.3" width="2.2" height="28.2"/></g></svg></div>
<svg class="a" style="left:0px;top:780px;" width="660" height="100" viewBox="0 0 660 100"><g fill="none" stroke="#4b2a85" stroke-width="1.7" stroke-dasharray="5.5 5.5"><path d="M172 58.8 H477.5 L652 32.5"/><path d="M477.5 58.8 L652 79.4"/></g><path d="M533 62.75 H559.5 Q563.5 62.75 563.5 66.75 V84 Q563.5 88 559.5 88 H547 L538 95 V88 H533 Q528.75 88 528.75 84 V66.75 Q528.75 62.75 533 62.75 Z" fill="#6459cf" stroke="#fff" stroke-width="1.5"/></svg>
<div class="a" style="left:652px;top:761.5px;width:4px;height:71.3px;background:#4e2a87"></div>
<div class="a" style="left:652px;top:840.6px;width:4px;height:71px;background:#4e2a87"></div>
<div class="a" style="left:674.3px;top:773.1px;font:bold 23px/23px 'Liberation Sans',sans-serif;color:#111;letter-spacing:0.40px;">David M. Fresco, Ph.D.</div>
<div class="a" style="left:674.3px;top:799.7px;font:bold 23px/23px 'Liberation Sans',sans-serif;color:#111;letter-spacing:0.52px;">Deleted:</div>
<div class="a" style="left:777.3px;top:798.5px;width:528.5px;height:25.3px;background:#b1aee8"></div>
<div class="a" style="left:773px;top:806.5px;width:3px;height:3.4px;background:#59a9f2"></div>
<div class="a" style="left:778px;top:800.6px;font:22px/22px 'Liberation Serif',serif;color:#000;-webkit-text-stroke:0.35px #000">an</div>
<div class="a" style="left:801px;top:811px;width:2.4px;height:2.4px;background:#59a9f2;border-radius:50%"></div>
<div class="a" style="left:674.3px;top:852.3px;font:bold 23px/23px 'Liberation Sans',sans-serif;color:#111;letter-spacing:0.40px;">David M. Fresco, Ph.D.</div>
<div class="a" style="left:674.3px;top:878.5px;font:bold 23px/23px 'Liberation Sans',sans-serif;color:#111;letter-spacing:0.52px;">Deleted:</div>
<div class="a" style="left:777.3px;top:877.7px;width:528.5px;height:26.1px;background:#b1aee8"></div>
<div class="a" style="left:773px;top:885.5px;width:3px;height:3.4px;background:#59a9f2"></div>
<div class="a" style="left:778px;top:879.1px;font:22.6px/22.6px 'Liberation Serif',serif;color:#000;-webkit-text-stroke:0.35px #000">treatment<span class="d"> </span>version</div>
<div class="a" style="left:1448.8px;top:249.8px;font:bold 29px/29px 'Liberation Sans',sans-serif;color:#1e1e1e;letter-spacing:-1.18px;">Comments</div>
<svg class="a" style="left:1936px;top:249px;" width="30" height="30" viewBox="0 0 30 30"><circle cx="15" cy="14.6" r="13.4" fill="#737373"/><path d="M10 9.6 L20 19.6 M20 9.6 L10 19.6" stroke="#fff" stroke-width="2.4" stroke-linecap="round"/></svg>
<svg class="a" style="left:1440px;top:308px;" width="45" height="45" viewBox="0 0 45 45"><path d="M11 10.5 H38 V31 H24 L18 37 V31 H11 Z" fill="#fbfbfb" stroke="#9a9a9a" stroke-width="1.2" stroke-linejoin="round"/><path d="M12 4.5 V18.5 M5 11.5 H19" stroke="#3ea83a" stroke-width="3.2"/></svg>
<div class="a" style="left:1493.6px;top:318.7px;font:normal 22px/22px 'Liberation Sans',sans-serif;color:#222;letter-spacing:1.05px;">New</div>
<div class="a" style="left:1474px;top:388px;width:444px;height:1103px;background:#f1f1f1;border-radius:9px 9px 0 0;box-shadow:0 1px 9px rgba(0,0,0,0.16)"></div>
<div class="a" style="left:1474px;top:388px;width:444px;height:369px;background:#ffffff;border-radius:9px 9px 0 0"></div>
<div class="a" style="left:1474px;top:388px;width:7px;height:1103px;background:#5d57d2;border-radius:9px 0 0 0"></div>
<div class="a" style="left:1481px;top:757px;width:437px;height:1.5px;background:#dedede"></div>
<div class="a" style="left:1481px;top:1148px;width:437px;height:1.5px;background:#dedede"></div>
<div class="a" style="left:1481px;top:1448px;width:437px;height:1.5px;background:#dedede"></div>
<svg class="a" style="left:1862px;top:405px;" width="40" height="16" viewBox="0 0 40 16"><circle cx="7" cy="8" r="2.6" fill="#4a4a4a"/><circle cx="19" cy="8" r="2.6" fill="#4a4a4a"/><circle cx="31" cy="8" r="2.6" fill="#4a4a4a"/></svg>
<svg class="a" style="left:1495.7px;top:415px;" width="46" height="46" viewBox="0 0 46 46"><circle cx="23" cy="23" r="22.6" fill="#e7a1cd"/></svg>
<div class="a" style="left:1504.2px;top:428.9px;font:normal 19px/19px 'Liberation Sans',sans-serif;color:#6b1d57;letter-spacing:-0.55px;">MD</div>
<svg class="a" style="left:1495.7px;top:773.4px;" width="46" height="46" viewBox="0 0 46 46"><circle cx="23" cy="23" r="22.6" fill="#94cd90"/></svg>
<div class="a" style="left:1511.2px;top:787.3px;font:normal 19px/19px 'Liberation Sans',sans-serif;color:#1f3f1f;letter-spacing:0.00px;">M</div>
<svg class="a" style="left:1495.7px;top:1164px;" width="46" height="46" viewBox="0 0 46 46"><circle cx="23" cy="23" r="22.6" fill="#c7ccf4"/></svg>
<div class="a" style="left:1504.2px;top:1177.9px;font:normal 19px/19px 'Liberation Sans',sans-serif;color:#33407f;letter-spacing:-0.55px;">DM</div>
<svg class="a" style="left:1495.7px;top:1463.6px;" width="46" height="46" viewBox="0 0 46 46"><circle cx="23" cy="23" r="22.6" fill="#c7ccf4"/></svg>
<div class="a" style="left:1504.2px;top:1477.5px;font:normal 19px/19px 'Liberation Sans',sans-serif;color:#33407f;letter-spacing:-0.55px;">DM</div>
<div class="a" style="left:1561.4px;top:424.3px;font:bold 23px/23px 'Liberation Sans',sans-serif;color:#474747;letter-spacing:0.26px;">Mennin, Douglas</div>
<div class="a" style="left:1565.0px;top:460.5px;font:normal 24px/24px 'Liberation Sans',sans-serif;color:#262626;letter-spacing:0.90px;">How about this title:</div>
<div class="a" style="left:1565.0px;top:490.6px;font:normal 24px/24px 'Liberation Sans',sans-serif;color:#262626;letter-spacing:0.84px;">Delineating self-referential</div>
<div class="a" style="left:1565.0px;top:520.7px;font:normal 24px/24px 'Liberation Sans',sans-serif;color:#262626;letter-spacing:0.83px;">processing and regulatory</div>
<div class="a" style="left:1565.0px;top:550.8px;font:normal 24px/24px 'Liberation Sans',sans-serif;color:#262626;letter-spacing:0.68px;">mechanisms in variably</div>
<div class="a" style="left:1565.0px;top:580.9px;font:normal 24px/24px 'Liberation Sans',sans-serif;color:#262626;letter-spacing:0.87px;">dosed emotion regulation</div>
<div class="a" style="left:1565.0px;top:611.0px;font:normal 24px/24px 'Liberation Sans',sans-serif;color:#262626;letter-spacing:0.86px;">therapy for distress</div>
<div class="a" style="left:1565.0px;top:641.1px;font:normal 24px/24px 'Liberation Sans',sans-serif;color:#262626;letter-spacing:0.85px;">disorders</div>
<div class="a" style="left:1561.4px;top:679.0px;font:normal 20.5px/20.5px 'Liberation Sans',sans-serif;color:#7a7a7a;letter-spacing:0.62px;">4/7/22 4:16 PM</div>
<div class="a" style="left:1561.4px;top:783.9px;font:bold 23px/23px 'Liberation Sans',sans-serif;color:#474747;letter-spacing:0.39px;">megan.renna@gmail.com</div>
<div class="a" style="left:1565.0px;top:820.9px;font:normal 24px/24px 'Liberation Sans',sans-serif;color:#262626;letter-spacing:0.80px;">It feels a little wordy to me</div>
<div class="a" style="left:1565.0px;top:851.1px;font:normal 24px/24px 'Liberation Sans',sans-serif;color:#262626;letter-spacing:0.77px;">but we can play around with</div>
<div class="a" style="left:1565.0px;top:881.3px;font:normal 24px/24px 'Liberation Sans',sans-serif;color:#262626;letter-spacing:0.75px;">it! I think delineating is</div>
<div class="a" style="left:1565.0px;top:911.5px;font:normal 24px/24px 'Liberation Sans',sans-serif;color:#262626;letter-spacing:0.85px;">throwing me off. And Do you</div>
<div class="a" style="left:1565.0px;top:941.7px;font:normal 24px/24px 'Liberation Sans',sans-serif;color:#262626;letter-spacing:0.91px;">think that self-referential is</div>
<div class="a" style="left:1565.0px;top:971.9px;font:normal 24px/24px 'Liberation Sans',sans-serif;color:#262626;letter-spacing:0.88px;">going to capture everyone&#x27;s</div>
<div class="a" style="left:1565.0px;top:1002.1px;font:normal 24px/24px 'Liberation Sans',sans-serif;color:#262626;letter-spacing:0.79px;">understanding? Just some</div>
<div class="a" style="left:1565.0px;top:1032.3px;font:normal 24px/24px 'Liberation Sans',sans-serif;color:#262626;letter-spacing:0.92px;">things to think about!</div>
<div class="a" style="left:1561.4px;top:1068.8px;font:normal 20.5px/20.5px 'Liberation Sans',sans-serif;color:#7a7a7a;letter-spacing:0.62px;">4/11/22 9:02 PM</div>
<div class="a" style="left:1561.2px;top:1175.0px;font:bold 23px/23px 'Liberation Sans',sans-serif;color:#474747;letter-spacing:0.28px;">David M. Fresco, Ph.D.</div>
<div class="a" style="left:1565.0px;top:1211.9px;font:normal 24px/24px 'Liberation Sans',sans-serif;color:#262626;letter-spacing:0.73px;white-space:pre">I would prefer to make the</div>
<div class="a" style="left:1565.0px;top:1242.1px;font:normal 24px/24px 'Liberation Sans',sans-serif;color:#262626;letter-spacing:0.81px;white-space:pre">title about PNT more than</div>
<div class="a" style="left:1565.0px;top:1272.4px;font:normal 24px/24px 'Liberation Sans',sans-serif;color:#262626;letter-spacing:0.81px;white-space:pre">dosing.  To me our findings</div>
<div class="a" style="left:1565.0px;top:1302.6px;font:normal 24px/24px 'Liberation Sans',sans-serif;color:#262626;letter-spacing:0.84px;white-space:pre">do not say much about the</div>
<div class="a" style="left:1565.0px;top:1332.9px;font:normal 24px/24px 'Liberation Sans',sans-serif;color:#262626;letter-spacing:0.88px;white-space:pre">merits of dosing</div>
<div class="a" style="left:1561.2px;top:1369.1px;font:normal 20.5px/20.5px 'Liberation Sans',sans-serif;color:#7a7a7a;letter-spacing:0.50px;">4/12/22 6:11 AM</div>
<div class="a" style="left:1561.2px;top:1481.5px;font:bold 23px/23px 'Liberation Sans',sans-serif;color:#474747;letter-spacing:0.28px;">David M. Fresco, Ph.D.</div>
<div class="a" style="left:1984.5px;top:1454.1px;font:bold 17px/17px 'Liberation Sans',sans-serif;color:#3a3a3a;letter-spacing:0.56px;">II</div>
<div class="a" style="left:172px;top:226.5px;width:252px;height:105px;background:#e7e7e7;border:1px solid #d3d3d3;border-radius:8px;box-shadow:0 8px 22px rgba(0,0,0,0.18)"></div>
<svg class="a" style="left:200px;top:230px;" width="60" height="100" viewBox="0 0 60 100"><g stroke="#2a2a2a" stroke-width="1.8"><rect x="12.3" y="10.9" width="31.6" height="27.8" fill="#f7f7f7"/><path d="M12.3 15.2 H43.9 M27.5 15.2 V38.7" fill="none"/></g><g fill="#84b5e8" stroke="#1e5fb8" stroke-width="1.5"><rect x="30.7" y="20" width="10" height="7.2"/><rect x="30.7" y="29.3" width="10" height="7.2"/></g><rect x="12.3" y="56" width="31.6" height="28" fill="#c7c6c6" stroke="#2a2a2a" stroke-width="1.8"/><rect x="33.2" y="56.5" width="10.3" height="27" fill="#7db5e8"/><rect x="33.2" y="56.5" width="10.3" height="5.2" fill="#fff"/><path d="M33.2 56 V84 M33.2 62 H43.9" stroke="#2a2a2a" stroke-width="1.8" fill="none"/><rect x="12.3" y="56" width="31.6" height="28" fill="none" stroke="#2a2a2a" stroke-width="1.8"/></svg>
<div class="a" style="left:256.0px;top:243.1px;font:normal 25.5px/25.5px 'Liberation Sans',sans-serif;color:#1e1e1e;letter-spacing:0.73px;">Contextual</div>
<div class="a" style="left:256.0px;top:288.8px;font:normal 25.5px/25.5px 'Liberation Sans',sans-serif;color:#1e1e1e;letter-spacing:0.38px;">List</div>
<svg class="a" style="left:176px;top:285px;" width="30" height="30" viewBox="0 0 30 30"><path d="M7 15.5 L12.8 23.5 L23.5 7.5" fill="none" stroke="#111" stroke-width="4.2" stroke-linecap="round" stroke-linejoin="round"/></svg>
</body></html>
